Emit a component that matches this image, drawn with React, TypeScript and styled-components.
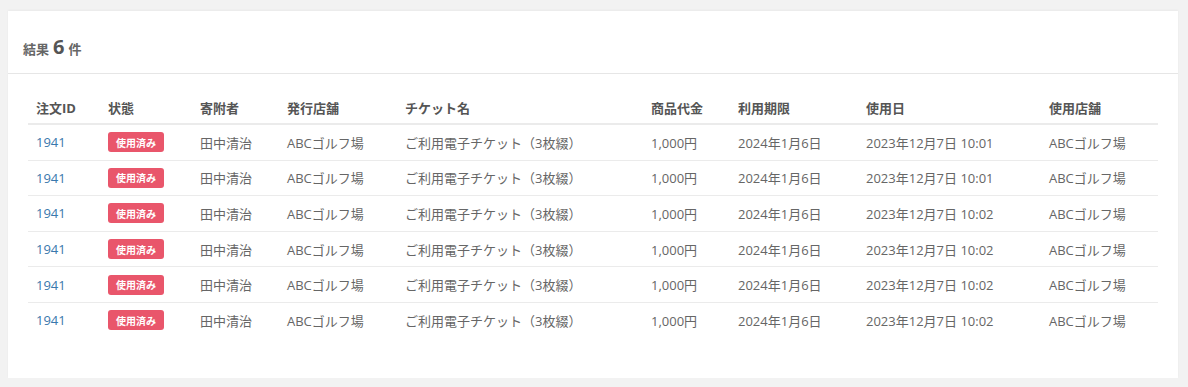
import styled, { createGlobalStyle } from 'styled-components'

const GlobalStyle = createGlobalStyle`
    html, body {
        margin: 0;
        padding: 0;
        background: #f2f2f2;
        font-family: "Open Sans", "Noto Sans CJK JP", sans-serif;
    }
`

type Row = {
    id: string
    donor: string
    store: string
    ticket: string
    price: string
    expires: string
    usedAt: string
    usedStore: string
}

const rows: Row[] = [
    { id: '1941', donor: '田中清治', store: 'ABCゴルフ場', ticket: 'ご利用電子チケット（3枚綴）', price: '1,000円', expires: '2024年1月6日', usedAt: '2023年12月7日 10:01', usedStore: 'ABCゴルフ場' },
    { id: '1941', donor: '田中清治', store: 'ABCゴルフ場', ticket: 'ご利用電子チケット（3枚綴）', price: '1,000円', expires: '2024年1月6日', usedAt: '2023年12月7日 10:01', usedStore: 'ABCゴルフ場' },
    { id: '1941', donor: '田中清治', store: 'ABCゴルフ場', ticket: 'ご利用電子チケット（3枚綴）', price: '1,000円', expires: '2024年1月6日', usedAt: '2023年12月7日 10:02', usedStore: 'ABCゴルフ場' },
    { id: '1941', donor: '田中清治', store: 'ABCゴルフ場', ticket: 'ご利用電子チケット（3枚綴）', price: '1,000円', expires: '2024年1月6日', usedAt: '2023年12月7日 10:02', usedStore: 'ABCゴルフ場' },
    { id: '1941', donor: '田中清治', store: 'ABCゴルフ場', ticket: 'ご利用電子チケット（3枚綴）', price: '1,000円', expires: '2024年1月6日', usedAt: '2023年12月7日 10:02', usedStore: 'ABCゴルフ場' },
    { id: '1941', donor: '田中清治', store: 'ABCゴルフ場', ticket: 'ご利用電子チケット（3枚綴）', price: '1,000円', expires: '2024年1月6日', usedAt: '2023年12月7日 10:02', usedStore: 'ABCゴルフ場' },
]

const columns = [
    { label: '注文ID', width: 72 },
    { label: '状態', width: 92 },
    { label: '寄附者', width: 87 },
    { label: '発行店舗', width: 118 },
    { label: 'チケット名', width: 246 },
    { label: '商品代金', width: 87 },
    { label: '利用期限', width: 128 },
    { label: '使用日', width: 183 },
    { label: '使用店舗', width: 117 },
]

export default function App() {
    return <>
        <GlobalStyle />
        <Page>
            <Card>
                <CardHeader>
                    <Label>結果</Label>
                    <Count>6</Count>
                    <Label>件</Label>
                </CardHeader>
                <CardBody>
                    <Table>
                        <colgroup>
                            {columns.map((c) => <col key={c.label} style={{ width: c.width }} />)}
                        </colgroup>
                        <thead>
                            <tr>
                                {columns.map((c) => <Th key={c.label}>{c.label}</Th>)}
                            </tr>
                        </thead>
                        <tbody>
                            {rows.map((r, i) => (
                                <Tr key={i}>
                                    <Td><IdLink href="#">{r.id}</IdLink></Td>
                                    <Td><Badge>使用済み</Badge></Td>
                                    <Td>{r.donor}</Td>
                                    <Td>{r.store}</Td>
                                    <Td>{r.ticket}</Td>
                                    <Td>{r.price}</Td>
                                    <Td>{r.expires}</Td>
                                    <Td>{r.usedAt}</Td>
                                    <Td>{r.usedStore}</Td>
                                </Tr>
                            ))}
                        </tbody>
                    </Table>
                </CardBody>
            </Card>
        </Page>
    </>
}

const Page = styled.div`
    padding: 11px 10px 9px 8px;
`

const Card = styled.div`
    background: #fff;
    box-shadow: 0 -1px 2px rgba(0, 0, 0, 0.04);
`

const CardHeader = styled.div`
    display: flex;
    align-items: baseline;
    gap: 4px;
    height: 63px;
    box-sizing: border-box;
    padding: 22px 15px 0;
    border-bottom: 1px solid #e6e6e6;
    color: #666;
`

const Label = styled.span`
    font-size: 13px;
    font-weight: 700;
`

const Count = styled.span`
    font-size: 20px;
    font-weight: 700;
    color: #555;
`

const CardBody = styled.div`
    padding: 17px 20px 40px;
`

const Table = styled.table`
    width: 100%;
    border-collapse: collapse;
    table-layout: fixed;
    font-size: 13px;
`

const Th = styled.th`
    text-align: left;
    font-weight: 700;
    color: #555;
    padding: 7px 8px 6px;
    height: 33px;
    box-sizing: border-box;
    border-bottom: 2px solid #ebebeb;
    white-space: nowrap;
`

const Tr = styled.tr`
    & + & td {
        border-top: 1px solid #ebebeb;
    }
`

const Td = styled.td`
    padding: 0 8px;
    height: 34.6px;
    color: #666;
    white-space: nowrap;
    vertical-align: middle;
`

const IdLink = styled.a`
    color: #3a78ad;
    text-decoration: none;
`

const Badge = styled.span`
    display: inline-flex;
    align-items: center;
    justify-content: center;
    width: 56px;
    height: 20px;
    border-radius: 3px;
    background: #e9566b;
    color: #fff;
    font-size: 10px;
    font-weight: 700;
`
